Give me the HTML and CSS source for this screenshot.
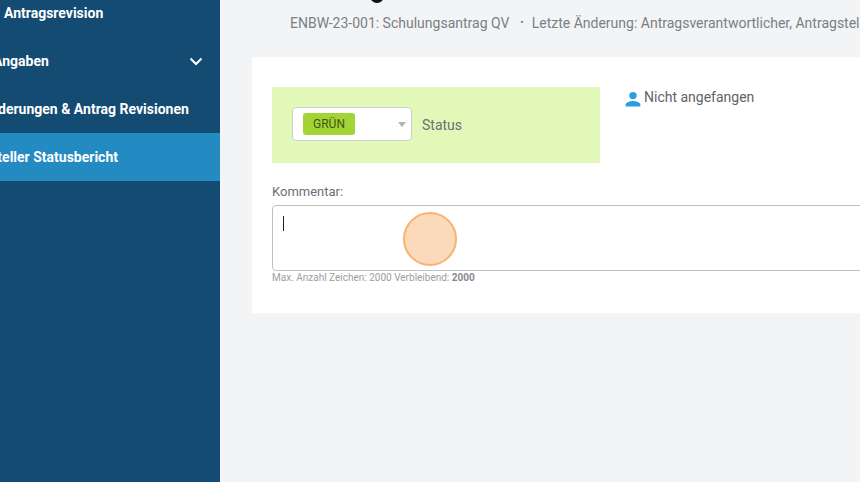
FILE: index.html
```html
<!DOCTYPE html>
<html lang="de">
<head>
  <meta charset="UTF-8">
  <meta name="viewport" content="width=device-width, initial-scale=1.0">
  <title>Statusbericht</title>
  <link rel="stylesheet" href="styles.css">
</head>
<body>
  <nav class="sidebar">
    <div class="nav-item"><span class="nav-label label-revision">Antragsrevision</span></div>
    <div class="nav-item">
      <span class="nav-label label-angaben">Angaben</span>
      <svg class="nav-chevron" width="14" height="9" viewBox="0 0 14 9"><path d="M1.5 1.5 7 7l5.5-5.5" fill="none" stroke="#fff" stroke-width="2"/></svg>
    </div>
    <div class="nav-item"><span class="nav-label label-aenderungen">Änderungen &amp; Antrag Revisionen</span></div>
    <div class="nav-item active"><span class="nav-label label-status">Antragsteller Statusbericht</span></div>
  </nav>

  <main class="content">
    <div class="title-clip"><span class="title-dot"></span></div>
    <div class="subtitle">
      <span>ENBW-23-001: Schulungsantrag QV</span>
      <span class="subtitle-sep">•</span>
      <span>Letzte Änderung: Antragsverantwortlicher, Antragsteller</span>
    </div>

    <section class="card">
      <div class="status-row">
        <div class="status-box">
          <div class="status-select">
            <span class="chip">GRÜN</span>
            <span class="select-arrow"></span>
          </div>
          <span class="status-label">Status</span>
        </div>
        <div class="progress">
          <svg class="person-icon" width="16" height="16" viewBox="0 0 16 16"><circle cx="8" cy="4.6" r="3.7" fill="#2a9fdc"/><path d="M.7 15.6v-2c0-2.5 4.6-3.7 7.3-3.7s7.3 1.2 7.3 3.7v2z" fill="#2a9fdc"/></svg>
          <span>Nicht angefangen</span>
        </div>
      </div>

      <div class="comment-label">Kommentar:</div>
      <div class="comment-box">
        <span class="caret"></span>
        <span class="click-marker"></span>
      </div>
      <div class="comment-hint">Max. Anzahl Zeichen: 2000 Verbleibend: <b>2000</b></div>
    </section>
  </main>
</body>
</html>
```

FILE: styles.css
```css
html, body {
  margin: 0;
  height: 100%;
  overflow: hidden;
}

body {
  display: flex;
  width: 860px;
  height: 482px;
  background-color: #f3f4f6;
  font-family: Roboto, "Liberation Sans", sans-serif;
  color: #6b7076;
}

.sidebar {
  flex: 0 0 220px;
  margin-top: -11px;
  background-color: #134b72;
  overflow: hidden;
}

.nav-item {
  display: flex;
  align-items: center;
  justify-content: space-between;
  height: 48px;
  padding-right: 17px;
  box-sizing: border-box;
  white-space: nowrap;
}

.nav-item.active {
  background-color: #248ac2;
}

.nav-label {
  font-size: 14px;
  font-weight: 700;
  color: #fff;
}

.label-revision { margin-left: 4px; }
.label-angaben { margin-left: -7px; }
.label-aenderungen { margin-left: -19px; }
.label-status { margin-left: -52px; }

.content {
  flex: 1;
  min-width: 0;
  padding-left: 32px;
}

.title-clip {
  height: 3px;
  overflow: hidden;
  padding-left: 118px;
}

.title-dot {
  display: block;
  width: 14px;
  height: 14px;
  margin-top: -11px;
  border-radius: 50%;
  background-color: #111;
}

.subtitle {
  display: flex;
  gap: 7px;
  margin: 12px 0 0 38px;
  font-size: 14px;
  line-height: 16px;
  white-space: nowrap;
  color: #7a7f85;
}

.subtitle-sep {
  margin: 0 1px 0 4px;
  font-size: 10px;
}

.card {
  margin-top: 26px;
  width: 640px;
  height: 256px;
  padding: 30px 0 0 20px;
  box-sizing: border-box;
  background-color: #fff;
}

.status-row {
  display: flex;
  align-items: flex-start;
  gap: 25px;
}

.status-box {
  display: flex;
  align-items: center;
  gap: 10px;
  flex: 0 0 328px;
  height: 76px;
  padding-left: 20px;
  box-sizing: border-box;
  background-color: #e2f8b8;
}

.status-select {
  display: flex;
  align-items: center;
  justify-content: space-between;
  width: 120px;
  height: 34px;
  margin-top: -2px;
  padding: 0 4px 0 10px;
  box-sizing: border-box;
  border: 1px solid #cdcfcc;
  border-radius: 4px;
  background-color: #fff;
}

.chip {
  width: 52px;
  height: 22px;
  margin-top: -1px;
  border-radius: 3px;
  background-color: #a3d435;
  color: #3e5a12;
  font-size: 12px;
  line-height: 22px;
  text-align: center;
}

.select-arrow {
  width: 0;
  height: 0;
  margin-right: 1px;
  border-left: 4px solid transparent;
  border-right: 4px solid transparent;
  border-top: 5px solid #b3b3b3;
}

.status-label {
  font-size: 14px;
  line-height: 18px;
  color: #6b7076;
}

.progress {
  display: flex;
  align-items: flex-start;
  gap: 3px;
  font-size: 14px;
  line-height: 20px;
  color: #5f6368;
}

.person-icon {
  margin-top: 4px;
}

.comment-label {
  margin-top: 21px;
  font-size: 13px;
  line-height: 16px;
}

.comment-box {
  position: relative;
  height: 66px;
  margin-top: 5px;
  box-sizing: border-box;
  border: 1px solid #c0c0c0;
  border-radius: 4px;
  background-color: #fff;
}

.caret {
  position: absolute;
  left: 10px;
  top: 10px;
  width: 1px;
  height: 15px;
  background-color: #222;
}

.click-marker {
  position: absolute;
  left: 130px;
  top: 6px;
  width: 54px;
  height: 54px;
  box-sizing: border-box;
  border: 2.5px solid #f9b36f;
  border-radius: 50%;
  background-color: #fbd9bb;
}

.comment-hint {
  margin-top: 1px;
  font-size: 10px;
  line-height: 12px;
  color: #9a9ea2;
}

.comment-hint b {
  color: #85898d;
}
```
